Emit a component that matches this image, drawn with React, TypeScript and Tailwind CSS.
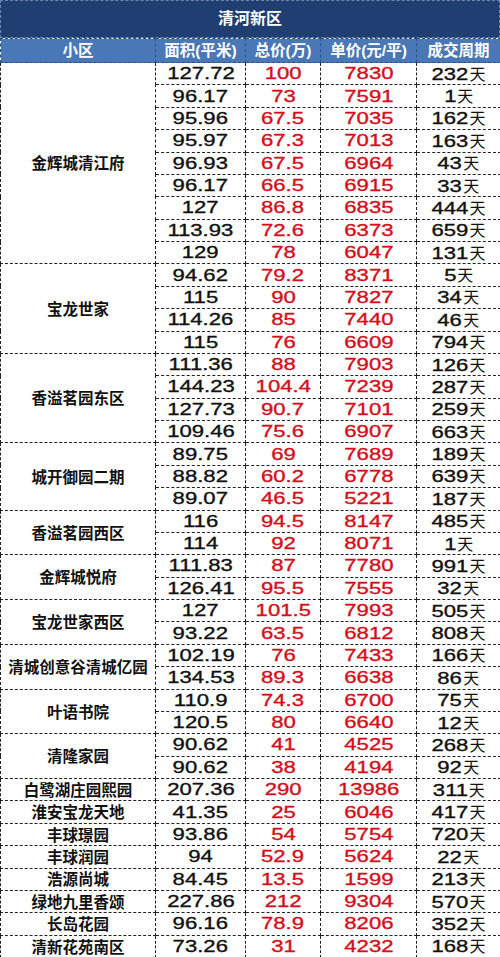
import React from "react";

type Row = [string, string, string, string];
type Group = { name: string; rows: Row[] };

const groups: Group[] = [
  {
    name: "金辉城清江府",
    rows: [
      ["127.72", "100", "7830", "232"],
      ["96.17", "73", "7591", "1"],
      ["95.96", "67.5", "7035", "162"],
      ["95.97", "67.3", "7013", "163"],
      ["96.93", "67.5", "6964", "43"],
      ["96.17", "66.5", "6915", "33"],
      ["127", "86.8", "6835", "444"],
      ["113.93", "72.6", "6373", "659"],
      ["129", "78", "6047", "131"],
    ],
  },
  {
    name: "宝龙世家",
    rows: [
      ["94.62", "79.2", "8371", "5"],
      ["115", "90", "7827", "34"],
      ["114.26", "85", "7440", "46"],
      ["115", "76", "6609", "794"],
    ],
  },
  {
    name: "香溢茗园东区",
    rows: [
      ["111.36", "88", "7903", "126"],
      ["144.23", "104.4", "7239", "287"],
      ["127.73", "90.7", "7101", "259"],
      ["109.46", "75.6", "6907", "663"],
    ],
  },
  {
    name: "城开御园二期",
    rows: [
      ["89.75", "69", "7689", "189"],
      ["88.82", "60.2", "6778", "639"],
      ["89.07", "46.5", "5221", "187"],
    ],
  },
  {
    name: "香溢茗园西区",
    rows: [
      ["116", "94.5", "8147", "485"],
      ["114", "92", "8071", "1"],
    ],
  },
  {
    name: "金辉城悦府",
    rows: [
      ["111.83", "87", "7780", "991"],
      ["126.41", "95.5", "7555", "32"],
    ],
  },
  {
    name: "宝龙世家西区",
    rows: [
      ["127", "101.5", "7993", "505"],
      ["93.22", "63.5", "6812", "808"],
    ],
  },
  {
    name: "清城创意谷清城亿园",
    rows: [
      ["102.19", "76", "7433", "166"],
      ["134.53", "89.3", "6638", "86"],
    ],
  },
  {
    name: "叶语书院",
    rows: [
      ["110.9", "74.3", "6700", "75"],
      ["120.5", "80", "6640", "12"],
    ],
  },
  {
    name: "清隆家园",
    rows: [
      ["90.62", "41", "4525", "268"],
      ["90.62", "38", "4194", "92"],
    ],
  },
  { name: "白鹭湖庄园熙园", rows: [["207.36", "290", "13986", "311"]] },
  { name: "淮安宝龙天地", rows: [["41.35", "25", "6046", "417"]] },
  { name: "丰球璟园", rows: [["93.86", "54", "5754", "720"]] },
  { name: "丰球润园", rows: [["94", "52.9", "5624", "22"]] },
  { name: "浩源尚城", rows: [["84.45", "13.5", "1599", "213"]] },
  { name: "绿地九里香颂", rows: [["227.86", "212", "9304", "570"]] },
  { name: "长岛花园", rows: [["96.16", "78.9", "8206", "352"]] },
  { name: "清新花苑南区", rows: [["73.26", "31", "4232", "168"]] },
];

const cell = "border border-dashed border-[#222] p-0 text-center align-middle leading-none";
const num =
  "inline-block scale-x-[1.3] text-[17px] font-['Liberation_Sans',Arial,sans-serif] [-webkit-text-stroke:0.35px_currentColor]";

export default function App() {
  return (
    <div className="w-[500px] h-[957px] overflow-hidden bg-white font-['Liberation_Sans','Noto_Sans_CJK_SC',sans-serif]">
      <div className="h-[38px] flex items-center justify-center bg-[#1f3e71] border border-dashed border-[#6d86ad] text-white text-[16px] font-bold">
        清河新区
      </div>
      <table className="w-[500px] table-fixed border-collapse">
        <colgroup>
          <col className="w-[155px]" />
          <col className="w-[90px]" />
          <col className="w-[75px]" />
          <col className="w-[96px]" />
          <col className="w-[84px]" />
        </colgroup>
        <thead>
          <tr className="h-[24px] bg-[#4a77b6] text-white text-[15.5px] font-bold">
            {["小区", "面积(平米)", "总价(万)", "单价(元/平)", "成交周期"].map((h) => (
              <th key={h} className="border border-dashed border-[#2c4f86] p-0 text-center align-middle leading-none font-bold">
                {h}
              </th>
            ))}
          </tr>
        </thead>
        <tbody>
          {groups.map((g) =>
            g.rows.map((r, i) => (
              <tr key={g.name + i} className="h-[22.375px]">
                {i === 0 && (
                  <td rowSpan={g.rows.length} className={`${cell} text-[15.5px] font-bold text-[#111] font-['Noto_Sans_CJK_SC',sans-serif]`}>
                    {g.name}
                  </td>
                )}
                <td className={`${cell} text-[#111]`}>
                  <span className={num}>{r[0]}</span>
                </td>
                <td className={`${cell} text-[#d40f1b]`}>
                  <span className={num}>{r[1]}</span>
                </td>
                <td className={`${cell} text-[#d40f1b]`}>
                  <span className={num}>{r[2]}</span>
                </td>
                <td className={`${cell} text-[#111]`}>
                  <span className="inline-flex items-baseline">
                    <span className={`${num} origin-right`} style={{ marginLeft: r[3].length * 9.45 * 0.3 }}>
                      {r[3]}
                    </span>
                    <span className="text-[16px] ml-[1px] font-['Noto_Sans_CJK_SC',sans-serif]">天</span>
                  </span>
                </td>
              </tr>
            ))
          )}
        </tbody>
      </table>
    </div>
  );
}
